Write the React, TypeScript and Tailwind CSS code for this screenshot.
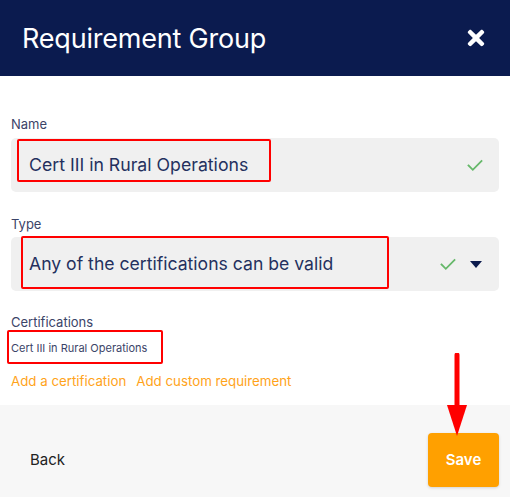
import React from "react";
import { FaTimes } from "react-icons/fa";

const Check = ({ className = "" }: { className?: string }) => (
  <svg width="16" height="13" viewBox="0 0 16 13" className={className}>
    <path d="M1.5 6.5 L5.8 10.8 L14.5 2" fill="none" stroke="#66b86a" strokeWidth="1.8" strokeLinecap="square" />
  </svg>
);

const Caret = () => (
  <svg width="12" height="7" viewBox="0 0 12 7">
    <path d="M0 0 H12 L6 7 Z" fill="#0b1a4d" />
  </svg>
);

export default function App() {
  return (
    <div
      className="relative w-[510px] h-[497px] flex flex-col bg-white overflow-hidden"
      style={{ fontFamily: "Inter, 'Noto Sans', sans-serif" }}
    >
      <header className="h-[76px] shrink-0 bg-[#0b1b4f] flex items-center justify-between pl-[22px] pr-[22px]">
        <h1 className="text-white text-[27px] font-normal tracking-[-0.2px] leading-none">Requirement Group</h1>
        <FaTimes className="text-white" size={24} />
      </header>

      <main className="flex-1 flex flex-col px-[11px] pt-[40px]">
        <label className="text-[13px] leading-[16px] text-[#3b4468]">Name</label>
        <div className="relative mt-[6px] h-[54px] rounded-[5px] bg-[#f0f0f0] flex items-center justify-between pl-[18px] pr-[16px]">
          <span className="text-[17.7px] text-[#24305e]">Cert III in Rural Operations</span>
          <Check />
          <div className="absolute left-[6px] top-[1px] w-[254px] h-[43px] border-2 border-[#ff0000] rounded-[2px]" />
        </div>

        <label className="mt-[24px] text-[13px] leading-[16px] text-[#3b4468]">Type</label>
        <div className="relative mt-[5px] h-[54px] rounded-[5px] bg-[#f0f0f0] flex items-center pl-[18px] pr-[17px]">
          <span className="flex-1 text-[17.6px] text-[#24305e]">Any of the certifications can be valid</span>
          <Check className="mr-[14px]" />
          <Caret />
          <div className="absolute left-[10px] -top-[1px] w-[368px] h-[53px] border-2 border-[#ff0000] rounded-[2px]" />
        </div>

        <label className="mt-[23px] text-[13px] leading-[16px] text-[#3b4468]">Certifications</label>
        <div className="relative mt-[11px] text-[11px] leading-[14px] text-[#3b4468]">
          Cert III in Rural Operations
          <div className="absolute -left-[4px] -top-[11px] w-[156px] h-[34px] border-2 border-[#ff0000] rounded-[2px]" />
        </div>
        <div className="mt-[17px] flex gap-[10px] text-[13.3px] leading-[18px] text-[#ffa31a]">
          <span>Add a certification</span>
          <span>Add custom requirement</span>
        </div>
      </main>

      <footer className="h-[92px] shrink-0 bg-[#f7f7f7] flex items-center justify-between pl-[30px] pr-[11px] pt-[18px]">
        <span className="text-[15px] text-[#222222]">Back</span>
        <button className="w-[71px] h-[54px] rounded-[4px] bg-[#ffa000] text-white font-semibold text-[15px] shadow-[0_1px_3px_rgba(0,0,0,0.15)]">
          Save
        </button>
      </footer>

      <svg className="absolute left-[445px] top-[353px]" width="24" height="86" viewBox="0 0 24 86">
        <path d="M12 2 V56" stroke="#ff0000" strokeWidth="5" strokeLinecap="round" />
        <path d="M2 52 H22 L12 83 Z" fill="#ff0000" />
      </svg>
    </div>
  );
}
